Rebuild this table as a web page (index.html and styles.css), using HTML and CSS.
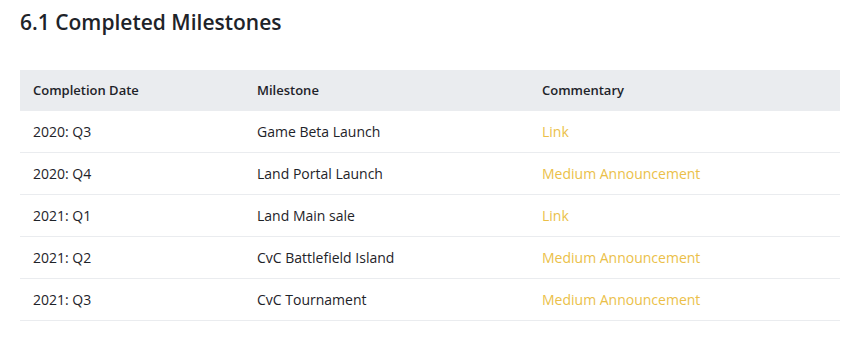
FILE: index.html
```html
<!DOCTYPE html>
<html>
<head>
<meta charset="utf-8">
<link rel="stylesheet" href="styles.css">
</head>
<body>
<div class="page">
  <h2 class="title">6.1 Completed Milestones</h2>
  <table class="ms">
    <colgroup>
      <col class="c1"><col class="c2"><col class="c3">
    </colgroup>
    <thead>
      <tr><th>Completion Date</th><th>Milestone</th><th>Commentary</th></tr>
    </thead>
    <tbody>
      <tr><td>2020: Q3</td><td>Game Beta Launch</td><td><a href="#">Link</a></td></tr>
      <tr><td>2020: Q4</td><td>Land Portal Launch</td><td><a href="#">Medium Announcement</a></td></tr>
      <tr><td>2021: Q1</td><td>Land Main sale</td><td><a href="#">Link</a></td></tr>
      <tr><td>2021: Q2</td><td>CvC Battlefield Island</td><td><a href="#">Medium Announcement</a></td></tr>
      <tr><td>2021: Q3</td><td>CvC Tournament</td><td><a href="#">Medium Announcement</a></td></tr>
    </tbody>
  </table>
</div>
</body>
</html>
```

FILE: styles.css
```css
html, body {
  margin: 0;
  padding: 0;
  background: #ffffff;
}
body {
  font-family: "Open Sans", "Noto Sans", "Liberation Sans", sans-serif;
  color: #1e2329;
}
.page {
  padding: 8px 16px 0 20px;
}
.title {
  margin: 0;
  font-size: 21px;
  line-height: 28px;
  font-weight: 600;
  color: #1e2329;
}
.ms {
  margin-top: 34px;
  width: 820px;
  border-collapse: collapse;
  table-layout: fixed;
}
.c1 { width: 224px; }
.c2 { width: 285px; }
.c3 { width: 311px; }
.ms th {
  background: #eaecef;
  text-align: left;
  font-size: 13px;
  font-weight: 600;
  height: 40px;
  padding: 0 13px 1px;
  color: #1e2329;
}
.ms td {
  font-size: 14px;
  height: 40px;
  padding: 0 13px 1px;
  border-bottom: 1px solid #eaecef;
  color: #1e2329;
}
.ms a {
  color: #ebbf49;
  text-decoration: none;
}
```
